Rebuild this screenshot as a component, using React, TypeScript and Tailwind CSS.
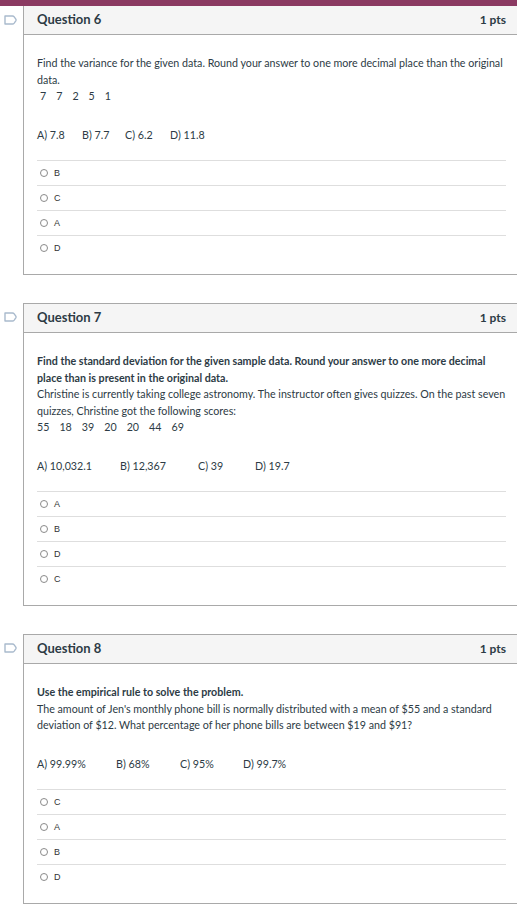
import React from 'react';

type Question = {
  num: number;
  body: React.ReactNode;
  choices: { label: string; w: number }[];
  order: string[];
};

const questions: Question[] = [
  {
    num: 6,
    body: (
      <>
        <p>
          Find the variance for the given data. Round your answer to one more decimal place than the
          original data.
        </p>
        <div className="flex gap-[10px] pl-[3px]">
          {['7', '7', '2', '5', '1'].map((d, i) => (
            <span key={i}>{d}</span>
          ))}
        </div>
      </>
    ),
    choices: [
      { label: 'A) 7.8', w: 45 },
      { label: 'B) 7.7', w: 43 },
      { label: 'C) 6.2', w: 45 },
      { label: 'D) 11.8', w: 60 },
    ],
    order: ['B', 'C', 'A', 'D'],
  },
  {
    num: 7,
    body: (
      <>
        <p className="font-bold">
          Find the standard deviation for the given sample data. Round your answer to one more decimal
          place than is present in the original data.
        </p>
        <p>
          Christine is currently taking college astronomy. The instructor often gives quizzes. On the
          past seven quizzes, Christine got the following scores:
        </p>
        <div className="flex gap-[10px]">
          {['55', '18', '39', '20', '20', '44', '69'].map((d, i) => (
            <span key={i}>{d}</span>
          ))}
        </div>
      </>
    ),
    choices: [
      { label: 'A) 10,032.1', w: 83 },
      { label: 'B) 12,367', w: 78 },
      { label: 'C) 39', w: 57 },
      { label: 'D) 19.7', w: 60 },
    ],
    order: ['A', 'B', 'D', 'C'],
  },
  {
    num: 8,
    body: (
      <>
        <p className="font-bold">Use the empirical rule to solve the problem.</p>
        <p>
          The amount of Jen's monthly phone bill is normally distributed with a mean of $55 and a
          standard deviation of $12. What percentage of her phone bills are between $19 and $91?
        </p>
      </>
    ),
    choices: [
      { label: 'A) 99.99%', w: 79 },
      { label: 'B) 68%', w: 64 },
      { label: 'C) 95%', w: 63 },
      { label: 'D) 99.7%', w: 60 },
    ],
    order: ['C', 'A', 'B', 'D'],
  },
];

function BookmarkIcon() {
  return (
    <svg width="13" height="10" viewBox="0 0 13 10" fill="none">
      <path
        d="M1 1 H8.5 Q9.5 1 10.2 1.9 L11.8 4.2 Q12.3 5 11.8 5.8 L10.2 8.1 Q9.5 9 8.5 9 H1 Z"
        stroke="#a9bacd"
        strokeWidth="1.4"
        strokeLinejoin="round"
      />
    </svg>
  );
}

function QuestionCard({ q, first }: { q: Question; first: boolean }) {
  return (
    <div className={`flex ${first ? '' : 'mt-[28px]'}`}>
      <div className="w-[23px] shrink-0 pl-[4px] pt-[9px]">
        <BookmarkIcon />
      </div>
      <div
        className={`flex-1 border-l border-b border-[#a9a9a9] ${first ? '' : 'border-t'}`}
      >
        <div className="flex h-[29px] items-center justify-between border-b border-[#a9a9a9] bg-[#f5f5f5] pl-[13px] pr-[11px]">
          <span className="text-[13px] font-bold text-[#2d3b45]">Question {q.num}</span>
          <span className="text-[12px] font-bold text-[#2d3b45]">1 pts</span>
        </div>
        <div className="pl-[13px] pr-[11px] pt-[20px] pb-[14px] text-[10.7px] leading-[16.5px] text-[#2d3b45]">
          {q.body}
          <div className="mt-[22px] mb-[17px] flex">
            {q.choices.map((c) => (
              <span key={c.label} className="inline-block shrink-0" style={{ width: c.w }}>
                {c.label}
              </span>
            ))}
          </div>
          <div>
            {q.order.map((l) => (
              <div key={l} className="flex h-[25px] items-center border-t border-[#dedede]">
                <span className="ml-[3px] h-[8px] w-[8px] rounded-full border border-[#8a8a8a]" />
                <span
                  className="ml-[6px] text-[9px] text-[#333]"
                  style={{ fontFamily: '"Liberation Sans", Arial, sans-serif' }}
                >
                  {l}
                </span>
              </div>
            ))}
          </div>
        </div>
      </div>
    </div>
  );
}

export default function App() {
  return (
    <div className="min-h-[919px] w-[517px] bg-white" style={{ fontFamily: 'Lato, "Noto Sans", sans-serif' }}>
      <div className="h-[6px] bg-[#8b3a62]" />
      {questions.map((q, i) => (
        <QuestionCard key={q.num} q={q} first={i === 0} />
      ))}
    </div>
  );
}
